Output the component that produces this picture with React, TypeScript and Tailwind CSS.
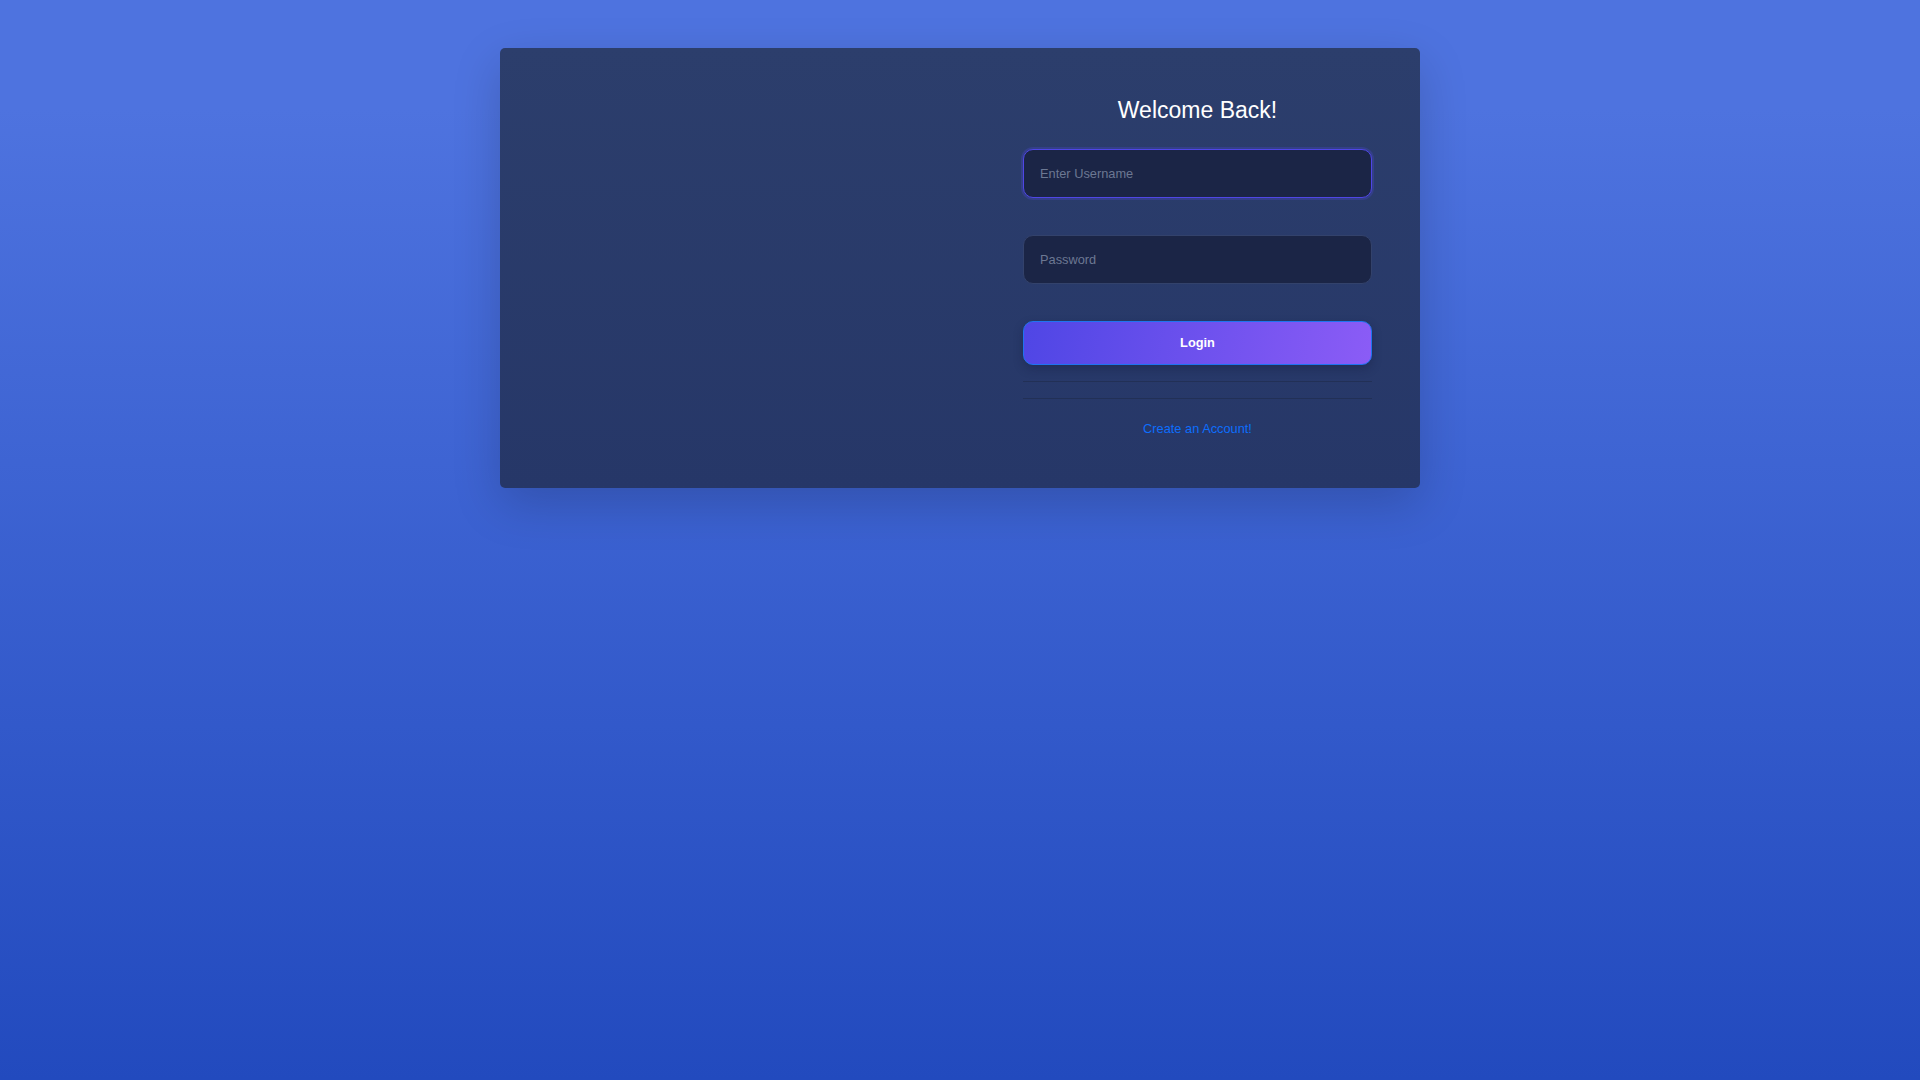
import React from "react";

export default function App() {
  return (
    <div className="min-h-screen w-full bg-[linear-gradient(180deg,#4e73df_10%,#224abe_100%)] font-['Liberation_Sans',Arial,sans-serif]">
      <div className="pt-12">
        <div className="mx-auto w-[920px] rounded-[5px] bg-[linear-gradient(180deg,#2c3e6c_0%,#263768_100%)] shadow-[0_1rem_3rem_rgba(0,0,0,0.175)] flex">
          {/* Left half (image area, empty) */}
          <div className="w-1/2" />

          {/* Login form */}
          <div className="w-1/2 pt-12 pb-12 pl-[63px] pr-12">
            <h1 className="pt-[1px] text-center text-white text-[23px] leading-[26px] font-normal mb-[26px]">
              Welcome Back!
            </h1>
            <form className="flex flex-col" onSubmit={(e) => e.preventDefault()}>
              <input
                type="text"
                placeholder="Enter Username"
                className="h-[49px] w-full rounded-[10px] border border-[#4f46e5] bg-[#1b2546] px-4 text-[12.8px] text-white placeholder:text-[#6c7893] outline-none shadow-[0_0_0_2px_rgba(79,70,229,0.25)]"
              />
              <input
                type="password"
                placeholder="Password"
                className="mt-[37px] h-[49px] w-full rounded-[10px] border border-[#33426b] bg-[#1b2546] px-4 text-[12.8px] text-white placeholder:text-[#6c7893] outline-none"
              />
              <button
                type="submit"
                className="mt-[37px] h-[44px] w-full rounded-[10px] border border-[#1f74f0] bg-[linear-gradient(100deg,#4f46e5_0%,#8b5cf6_100%)] text-[12.8px] font-bold text-white shadow-[0_4px_10px_rgba(20,25,60,0.35)]"
              >
                Login
              </button>
            </form>
            <hr className="mt-4 border-0 border-t border-[#223056]" />
            <hr className="mt-4 border-0 border-t border-[#223056]" />
            <div className="mt-[17px] text-center">
              <a href="#" className="text-[12.8px] leading-[19px] text-[#0d6efd]">
                Create an Account!
              </a>
            </div>
          </div>
        </div>
      </div>
    </div>
  );
}
